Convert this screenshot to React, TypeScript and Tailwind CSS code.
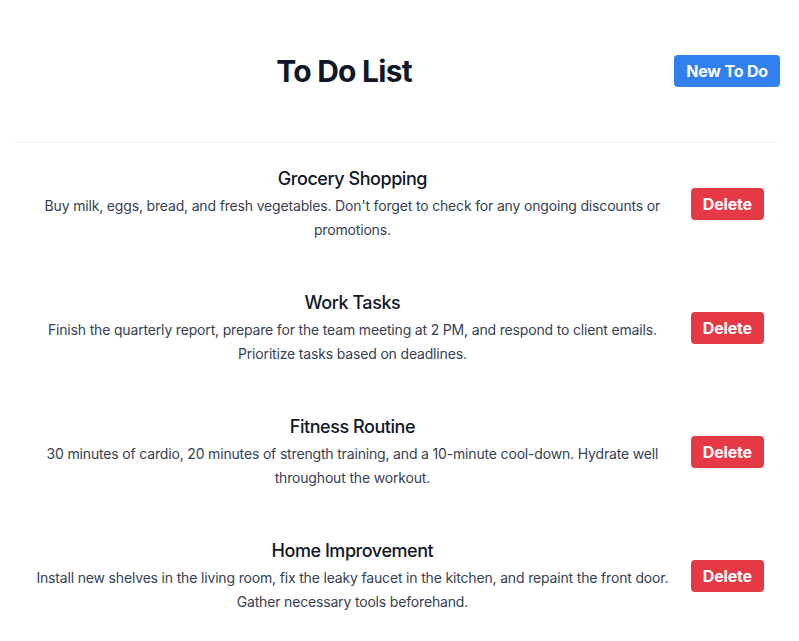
const todos = [
  {
    id: 1,
    title: "Grocery Shopping",
    body: "Buy milk, eggs, bread, and fresh vegetables. Don't forget to check for any ongoing discounts or promotions.",
  },
  {
    id: 2,
    title: "Work Tasks",
    body: "Finish the quarterly report, prepare for the team meeting at 2 PM, and respond to client emails. Prioritize tasks based on deadlines.",
  },
  {
    id: 3,
    title: "Fitness Routine",
    body: "30 minutes of cardio, 20 minutes of strength training, and a 10-minute cool-down. Hydrate well throughout the workout.",
  },
  {
    id: 4,
    title: "Home Improvement",
    body: "Install new shelves in the living room, fix the leaky faucet in the kitchen, and repaint the front door. Gather necessary tools beforehand.",
  },
];

export default function App() {
  return (
    <div className="min-h-screen bg-white font-['Inter',sans-serif] text-gray-900">
      <div className="ml-[14px] w-[766px]">
        <header className="flex h-[142px] items-center border-b border-gray-100">
          <h1 className="flex-1 text-center text-3xl font-bold tracking-tight">To Do List</h1>
          <button className="rounded bg-[#3180f0] px-3 py-[4px] text-base font-bold tracking-[-0.01em] text-white hover:bg-blue-600">
            New To Do
          </button>
        </header>
        <ul>
          {todos.map((t) => (
            <li key={t.id} className="flex items-center gap-4 px-4 py-6">
              <div className="flex-1 text-center">
                <h2 className="text-lg font-medium leading-[26px] tracking-tight text-gray-900">{t.title}</h2>
                <p className="mt-[2px] text-sm leading-6 tracking-[-0.012em] text-gray-700">{t.body}</p>
              </div>
              <button className="rounded bg-[#e63946] px-3 py-[4px] text-base font-bold tracking-[-0.01em] text-white">
                Delete
              </button>
            </li>
          ))}
        </ul>
      </div>
    </div>
  );
}
